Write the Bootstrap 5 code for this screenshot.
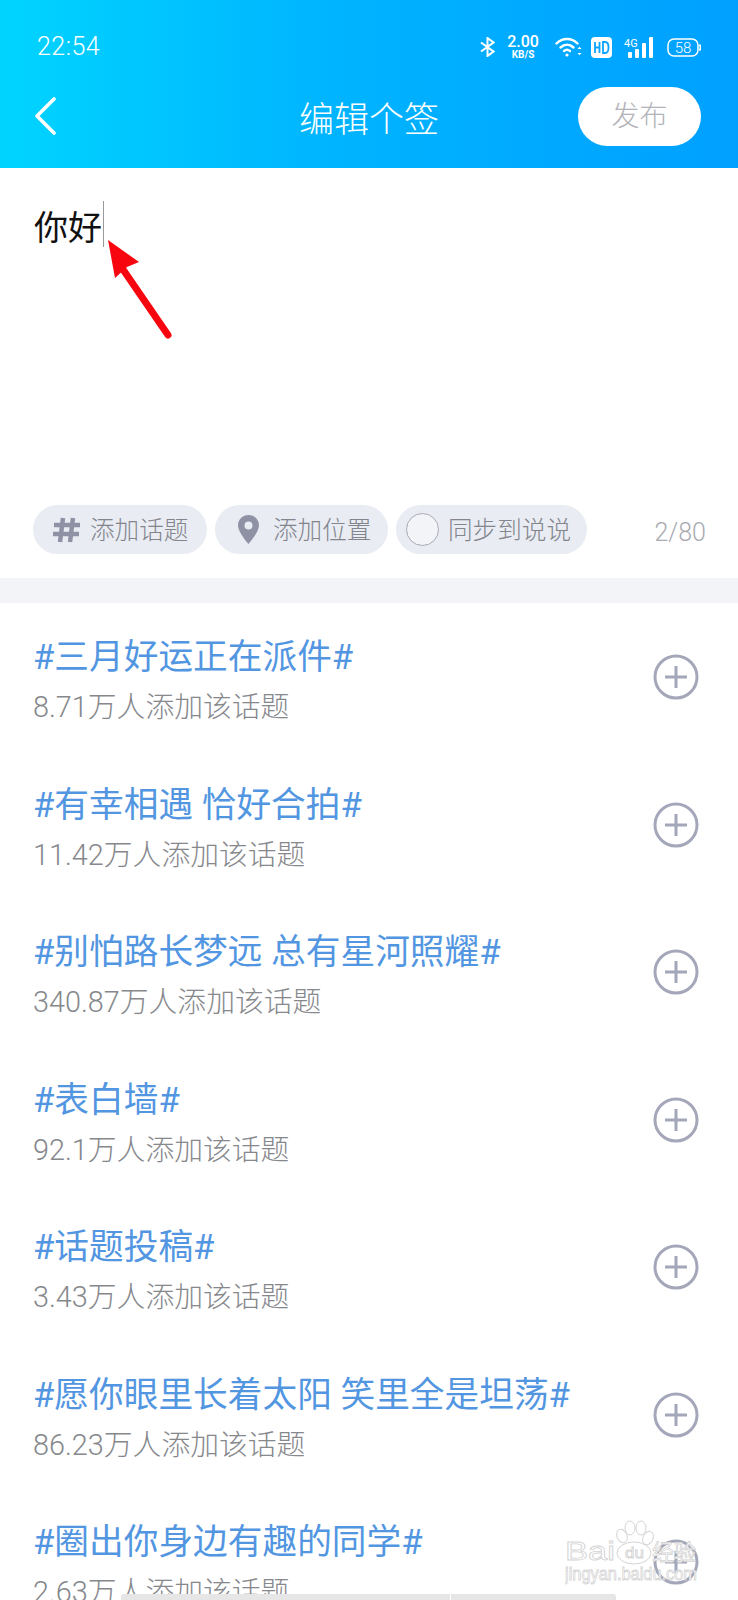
<!DOCTYPE html>
<html lang="zh">
<head>
    <meta charset="UTF-8">
    <meta name="viewport" content="width=device-width, initial-scale=1.0">
    <title>编辑个签</title>
    <link href="https://cdn.jsdelivr.net/npm/bootstrap@5.3.0/dist/css/bootstrap.min.css" rel="stylesheet">
    <style>
        html, body {
            height: 1600px;
            overflow: hidden;
        }
        body {
            font-family: "Roboto", "Noto Sans CJK SC", sans-serif;
            position: relative;
            background: #fff;
        }
        .app-head {
            height: 168px;
            background: linear-gradient(90deg, #00d4ff 0%, #00b4ff 45%, #00a0ff 100%);
            color: #fff;
        }
        .status-row {
            height: 86px;
            padding: 8px 37px 0 37px;
        }
        .clock {
            font-size: 25px;
            font-weight: 300;
            letter-spacing: .5px;
        }
        .ico-speed { margin-left: 12px; }
        .ico-wifi { margin-left: 16px; }
        .ico-hd { margin-left: 9px; }
        .ico-signal { margin-left: 12px; }
        .ico-batt { margin-left: 13px; }
        .net-speed {
            width: 32px;
            line-height: 1;
            text-align: center;
        }
        .net-speed b {
            display: block;
            font-size: 16px;
            font-weight: 500;
        }
        .net-speed i {
            display: block;
            font-size: 10px;
            font-style: normal;
            font-weight: 700;
        }
        .title-row {
            height: 60px;
            padding: 0 37px 0 34px;
        }
        .page-name {
            font-size: 35px;
            font-weight: 300;
            flex: 1;
            text-align: center;
            padding: 10px 0 0 102px;
            line-height: 50px;
        }
        .send-btn {
            width: 123px;
            height: 59px;
            border-radius: 30px;
            background: #fff;
            color: #b3b3b9;
            font-size: 28px;
            font-weight: 300;
            border: 0;
            padding: 2px 0 0;
        }
        .edit-box {
            height: 410px;
            padding: 33px 33px 24px;
        }
        .typed {
            font-size: 34px;
            line-height: 54px;
            color: #111;
            font-weight: 400;
            padding-left: 1px;
        }
        .caret-bar {
            display: inline-block;
            width: 1px;
            height: 46px;
            background: #9a9a9a;
            vertical-align: top;
            margin-left: 1px;
        }
        .chip {
            height: 49px;
            border-radius: 25px;
            background: #e9ecf3;
            color: #83858d;
            font-size: 24.6px;
            font-weight: 300;
            white-space: nowrap;
        }
        .chip > span:last-child { padding-top: 3px; }
        .chip-topic { width: 174px; padding-left: 20px; gap: 9px; margin-right: 8px; }
        .chip-place { width: 173px; padding-left: 23px; gap: 14px; margin-right: 8px; }
        .chip-sync { width: 191px; padding-left: 10px; gap: 9px; }
        .sync-ring {
            width: 33px;
            height: 33px;
            border-radius: 50%;
            border: 1.5px solid #a9abb3;
            background: #f2f4f8;
        }
        .char-count {
            font-size: 25px;
            font-weight: 300;
            color: #a9abb1;
            margin-left: auto;
            margin-right: -1px;
            padding-top: 7px;
        }
        .band {
            height: 25px;
            background: #f3f4f7;
        }
        .topic-row {
            height: 147.5px;
            padding: 29px 39px 0 33px;
        }
        .topic-name {
            font-size: 34.7px;
            line-height: 50px;
            color: #5296e2;
            font-weight: 400;
            white-space: nowrap;
        }
        .topic-sub {
            font-size: 28.8px;
            line-height: 50px;
            color: #86888c;
            font-weight: 300;
            white-space: nowrap;
        }
        .plus-ico {
            flex: none;
            margin-top: 22px;
        }
        .red-arrow {
            position: absolute;
            left: 100px;
            top: 232px;
        }
        .wm {
            position: absolute;
            left: 565px;
            top: 1520px;
        }
        .wm text {
            fill: #fff;
            stroke: #d4d4d4;
            stroke-width: .8px;
            font-family: "Liberation Sans", "Noto Sans CJK SC", sans-serif;
        }
        .home-strip {
            position: absolute;
            left: 121px;
            top: 1594px;
            width: 495px;
            height: 6px;
            background: #e6e6e6;
            border-radius: 3px 3px 0 0;
        }
        .home-strip::after {
            content: "";
            position: absolute;
            left: 329px;
            top: 0;
            width: 1px;
            height: 6px;
            background: #fff;
        }
    </style>
</head>
<body>
    <!-- header -->
    <header class="app-head">
        <div class="status-row d-flex align-items-center justify-content-between">
            <span class="clock">22:54</span>
            <div class="d-flex align-items-center">
                <svg width="15" height="20" viewBox="0 0 15 20" fill="none" stroke="#fff" stroke-width="2">
                    <path d="M1 5.500 13.500 14.500 7.500 19V1l6 4.500L1 14.500"/>
                </svg>
                <div class="net-speed ico-speed"><b>2.00</b><i>KB/S</i></div>
                <svg class="ico-wifi" width="27" height="22" viewBox="0 0 27 22" fill="none" stroke="#fff" stroke-width="2.400" stroke-linecap="round">
                    <path d="M1.500 7.500C7.500 1.500 16.500 1.500 22.500 7.500"/>
                    <path d="M5.500 11.500C9.500 7.800 14.500 7.800 18.500 11.500"/>
                    <path d="M9 15c2-1.600 4-1.600 6 0"/>
                    <circle cx="12" cy="19" r="1.600" fill="#fff" stroke="none"/>
                    <path d="M22.500 13l2-2.200 2 2.200zM22.500 17l2 2.200 2-2.200z" fill="#fff" stroke="none"/>
                </svg>
                <svg class="ico-hd" width="21" height="21" viewBox="0 0 21 21">
                    <rect width="21" height="21" rx="4" fill="#fff"/>
                    <path d="M4 5v11M8.500 5v11M4 10.500H8.500M12 5v11h2.200c2.600 0 3.300-2.500 3.300-5.500s-.7-5.500-3.300-5.500z" fill="none" stroke="#0aa4ff" stroke-width="1.800"/>
                </svg>
                <svg class="ico-signal" width="30" height="21" viewBox="0 0 30 21" fill="#fff">
                    <text x="0" y="10" font-size="11" font-family="Roboto" fill="#fff">4G</text>
                    <rect x="4" y="15" width="4" height="6" rx="1"/>
                    <rect x="11" y="12" width="4" height="9" rx="1"/>
                    <rect x="18" y="6" width="4" height="15" rx="1"/>
                    <rect x="25" y="0" width="4" height="21" rx="1"/>
                </svg>
                <svg class="ico-batt" width="34" height="19" viewBox="0 0 34 19" fill="none">
                    <rect x="1" y="1" width="30" height="17" rx="6" stroke="#fff" stroke-width="1.500"/>
                    <path d="M32.500 6.500c1.300 1.500 1.300 4.500 0 6" stroke="#fff" stroke-width="1.800"/>
                    <text x="16" y="15" text-anchor="middle" font-size="15" font-family="Roboto" font-weight="300" fill="#fff">58</text>
                </svg>
            </div>
        </div>
        <div class="title-row d-flex align-items-center">
            <svg width="24" height="38" viewBox="0 0 24 38" fill="none" stroke="#fff" stroke-width="3.600" stroke-linecap="round" stroke-linejoin="round">
                <path d="M20 2 3 19l17 17"/>
            </svg>
            <div class="page-name">编辑个签</div>
            <button type="button" class="send-btn">发布</button>
        </div>
    </header>

    <!-- editor -->
    <section class="edit-box d-flex flex-column">
        <div class="typed">你好<span class="caret-bar"></span></div>
        <div class="d-flex align-items-center mt-auto">
            <div class="chip chip-topic d-flex align-items-center">
                <svg width="28" height="26" viewBox="0 0 28 26" fill="none" stroke="#8f92a5" stroke-width="4.500">
                    <path d="M10 1 7 25M20 1l-3 24M1 8h26M0 17h26"/>
                </svg>
                <span>添加话题</span>
            </div>
            <div class="chip chip-place d-flex align-items-center">
                <svg width="21" height="29" viewBox="0 0 21 29">
                    <path fill-rule="evenodd" fill="#8f92a5" d="M10.500 0C4.700 0 0 4.600 0 10.300 0 17.500 10.500 29 10.500 29S21 17.500 21 10.300C21 4.600 16.300 0 10.500 0zm0 6.500a4 4 0 1 1 0 8 4 4 0 0 1 0-8z"/>
                </svg>
                <span>添加位置</span>
            </div>
            <div class="chip chip-sync d-flex align-items-center">
                <span class="sync-ring"></span>
                <span>同步到说说</span>
            </div>
            <span class="char-count">2/80</span>
        </div>
    </section>
    <svg class="red-arrow" width="76" height="110" viewBox="0 0 76 110" aria-hidden="true">
        <path fill="#f8060f" d="M8 8 39 30 27 35 15 46z"/>
        <path d="M22 36 68 103" stroke="#f8060f" stroke-width="7" stroke-linecap="round"/>
    </svg>

    <div class="band"></div>

    <!-- topics -->
    <div id="topics"></div>

    <svg class="wm" width="140" height="70" viewBox="0 0 140 70" aria-hidden="true">
        <g fill="#fff" fill-opacity=".75" stroke="#d4d4d4">
            <ellipse cx="57" cy="16" rx="5" ry="7" transform="rotate(-25 57 16)"/>
            <ellipse cx="65" cy="8" rx="5" ry="7"/>
            <ellipse cx="76" cy="8" rx="5" ry="7"/>
            <ellipse cx="83" cy="18" rx="5" ry="7" transform="rotate(25 83 18)"/>
            <ellipse cx="69" cy="33" rx="17" ry="11"/>
        </g>
        <text x="0" y="40" font-size="26" textLength="50" lengthAdjust="spacingAndGlyphs">Bai</text>
        <text x="60" y="38" font-size="15" textLength="19" lengthAdjust="spacingAndGlyphs">du</text>
        <text x="87" y="40" font-size="22">经验</text>
        <text x="0" y="60" font-size="18" textLength="132" lengthAdjust="spacingAndGlyphs">jingyan.baidu.com</text>
    </svg>
    <div class="home-strip"></div>

    <script src="https://cdn.jsdelivr.net/npm/bootstrap@5.3.0/dist/js/bootstrap.bundle.min.js"></script>
    <script>
        const topics = [
            ['#三月好运正在派件#', '8.71万人添加该话题'],
            ['#有幸相遇 恰好合拍#', '11.42万人添加该话题'],
            ['#别怕路长梦远 总有星河照耀#', '340.87万人添加该话题'],
            ['#表白墙#', '92.1万人添加该话题'],
            ['#话题投稿#', '3.43万人添加该话题'],
            ['#愿你眼里长着太阳 笑里全是坦荡#', '86.23万人添加该话题'],
            ['#圈出你身边有趣的同学#', '2.63万人添加该话题']
        ];
        const plus = `<svg class="plus-ico" width="46" height="46" viewBox="0 0 46 46" fill="none" stroke="#a3a7b9" stroke-width="3">
            <circle cx="23" cy="23" r="21"/><path d="M23 12v22M12 23h22"/></svg>`;
        document.getElementById('topics').innerHTML = topics.map(t => `
            <div class="topic-row d-flex justify-content-between">
                <div><div class="topic-name">${t[0]}</div><div class="topic-sub">${t[1]}</div></div>
                ${plus}
            </div>`).join('');
    </script>
</body>
</html>
